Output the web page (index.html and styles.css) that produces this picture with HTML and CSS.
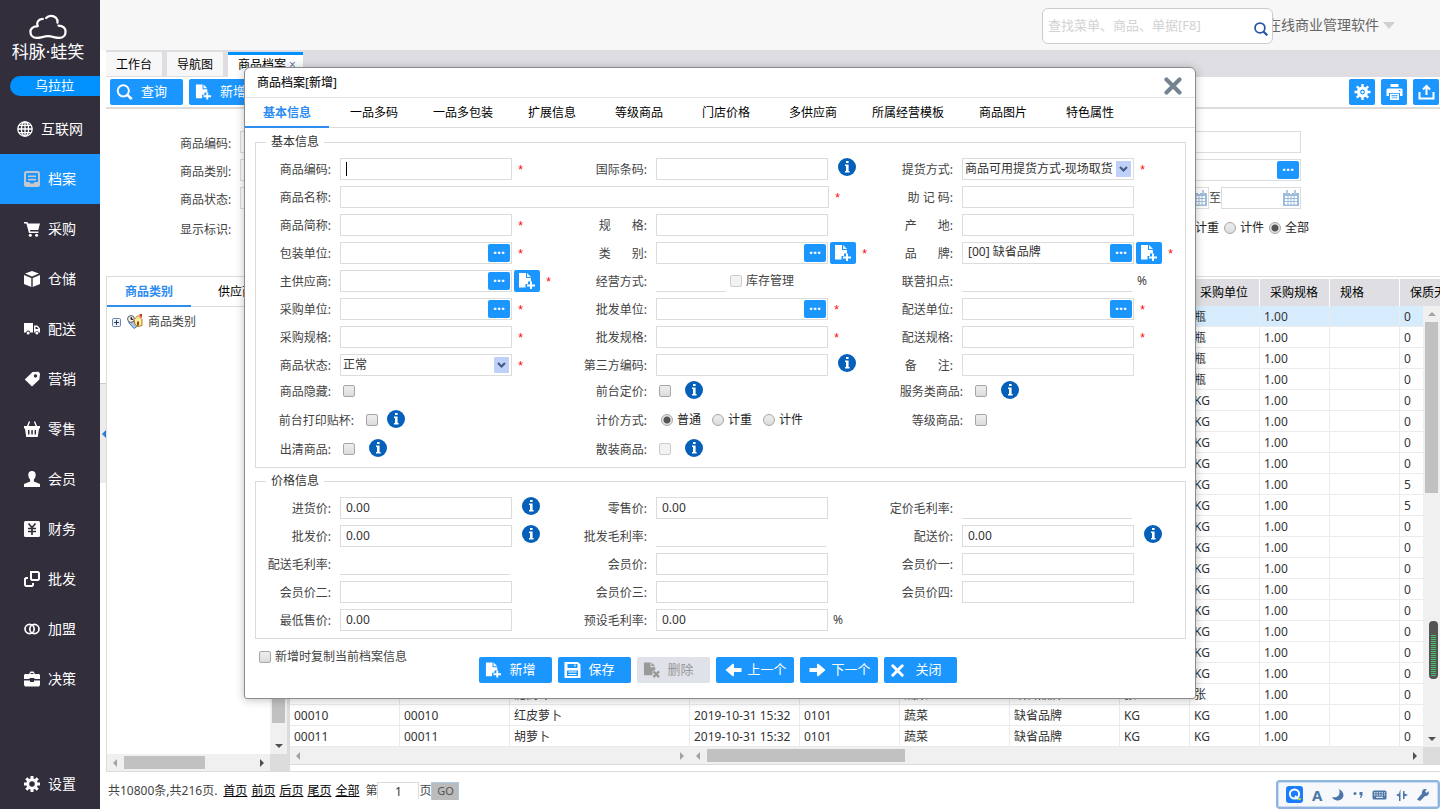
FILE: index.html
```
<!DOCTYPE html>
<html lang="zh-CN">
<head>
  <meta charset="UTF-8" />
  <meta name="viewport" content="width=device-width, initial-scale=1.0" />
  <title>商品档案</title>
  <link rel="stylesheet" href="styles.css">
</head>
<body>
  <svg class="defs" aria-hidden="true">
    <symbol id="i-globe" viewBox="0 0 16 16"><g fill="none" stroke="currentColor" stroke-width="1.3"><circle cx="8" cy="8" r="7.2"/><ellipse cx="8" cy="8" rx="3.6" ry="7.2"/><path d="M8 1v14M1 8h14M2 4.4h12M2 11.6h12"/></g></symbol>
    <symbol id="i-file" viewBox="0 0 16 16"><path fill="none" stroke="currentColor" stroke-width="2" d="M2.5 1h11A1.5 1.5 0 0 1 15 2.500v11a1.500 1.500 0 0 1-1.500 1.500h-11A1.500 1.500 0 0 1 1 13.500v-11A1.500 1.500 0 0 1 2.500 1z"/><path fill="currentColor" d="M4 4.500h8v1.600H4zM4 7.800h8v1.600H4zM1 11h4.500l1 1.500h3l1-1.500H15v4H1z"/></symbol>
    <symbol id="i-cart" viewBox="0 0 16 16"><path fill="currentColor" d="M0 1h3.400l.6 1.500h12L14.300 9H6l.4 1.400h8V12H5L2.400 2.600H0z"/><circle cx="6.300" cy="14.300" r="1.500" fill="currentColor"/><circle cx="12.600" cy="14.300" r="1.500" fill="currentColor"/></symbol>
    <symbol id="i-box" viewBox="0 0 16 16"><path fill="currentColor" d="M8 0l7 2.600L8 5.500 1 2.600zM0 4l7.300 3v9L0 13zM16 4L8.700 7v9l7.300-3z"/></symbol>
    <symbol id="i-truck" viewBox="0 0 16 16"><path fill="currentColor" fill-rule="evenodd" d="M0 2h9v9.500H6.200a2 2 0 0 0-4 0H0zM10 4.500h3.500L16 7.500v4h-1.200a2 2 0 0 0-3.800 0h-1zM11.500 6v2h3L13 6z"/><circle cx="4.200" cy="12" r="1.500" fill="currentColor"/><circle cx="12.900" cy="12" r="1.500" fill="currentColor"/></symbol>
    <symbol id="i-tag" viewBox="0 0 16 16"><path fill="currentColor" fill-rule="evenodd" d="M8.500 1l6-.2L16 2.500l-.6 6L8 15.500.8 8.500zM11.500 3.200a1.700 1.700 0 1 0 .01 0z"/></symbol>
    <symbol id="i-basket" viewBox="0 0 16 16"><path fill="none" stroke="currentColor" stroke-width="1.400" d="M3.500 5.500l2-5M12.500 5.500l-2-5"/><path fill="currentColor" fill-rule="evenodd" d="M0 5h16v2.400h-1L13.800 16H2.200L1 7.400H0zM4 9v4.500h1.500V9zM7.300 9v4.500h1.500V9zM10.600 9v4.500H12V9z"/></symbol>
    <symbol id="i-user" viewBox="0 0 16 16"><path fill="currentColor" d="M8 0c2.300 0 3.800 1.500 3.700 4-.1 2-.9 3.600-1.900 4.600v2L16 13v3H0v-3l6.200-2.400v-2C5.200 7.600 4.400 6 4.300 4 4.200 1.500 5.700 0 8 0z"/></symbol>
    <symbol id="i-yen" viewBox="0 0 16 16"><rect width="16" height="16" rx="1.500" fill="currentColor"/><path fill="none" stroke="#322e3c" stroke-width="1.700" d="M4.500 2.500L8 6.500l3.500-4M4 7.500h8M4 10.500h8M8 6.500V14"/></symbol>
    <symbol id="i-copy" viewBox="0 0 16 16"><path fill="none" stroke="currentColor" stroke-width="2" d="M7 1h7l1 1v6l-1 1H8L7 8zM4 7H2L1 8v6l1 1h6l1-1v-2"/></symbol>
    <symbol id="i-rings" viewBox="0 0 16 16"><g fill="none" stroke="currentColor" stroke-width="1.700"><circle cx="5.600" cy="8" r="4.600"/><circle cx="10.400" cy="8" r="4.600"/></g></symbol>
    <symbol id="i-case" viewBox="0 0 16 16"><path fill="currentColor" fill-rule="evenodd" d="M5 3l1.500-2.500h3L11 3h4l1 1v4h-5.500V7h-5v1H0V4l1-1zM6.500 3h3V2h-3zM0 9.500h6V11h4V9.500h6V14l-1 1.500H1L0 14z"/></symbol>
    <symbol id="i-gear" viewBox="0 0 16 16"><circle cx="8" cy="8" r="4.300" fill="none" stroke="currentColor" stroke-width="3"/><path stroke="currentColor" stroke-width="3" d="M8 0v3M8 13v3M0 8h3M13 8h3M2.300 2.300l2.200 2.200M11.500 11.500l2.200 2.200M2.300 13.700l2.200-2.200M11.500 4.500l2.200-2.200"/></symbol>
    <symbol id="i-cog" viewBox="0 0 16 16"><circle cx="8" cy="8" r="4" fill="none" stroke="currentColor" stroke-width="3.200"/><circle cx="8" cy="8" r="1.200" fill="currentColor"/><path stroke="currentColor" stroke-width="2.400" d="M8 0v3M8 13v3M0 8h3M13 8h3M2.300 2.300l2.200 2.200M11.500 11.500l2.200 2.200M2.300 13.700l2.200-2.200M11.500 4.500l2.200-2.200"/></symbol>
    <symbol id="i-search" viewBox="0 0 16 16"><circle cx="6.800" cy="6.800" r="5.600" fill="none" stroke="currentColor" stroke-width="2"/><path stroke="currentColor" stroke-width="2.600" d="M10.800 10.800l4.400 4.400"/></symbol>
    <symbol id="i-add" viewBox="0 0 18 16"><path fill="currentColor" d="M1 0h7v5h5v3.500h-3V11H7.500v3.500H1zM9 0l4 4H9z"/><path stroke="currentColor" stroke-width="2" d="M9 12.500h8M13 8.500v7.500"/></symbol>
    <symbol id="i-del" viewBox="0 0 18 16"><path fill="currentColor" d="M1 0h7v5h5v3l-3 1v4.500H1zM9 0l4 4H9z"/><path stroke="currentColor" stroke-width="2.400" d="M11 9.500l6 6M17 9.500l-6 6"/></symbol>
    <symbol id="i-save" viewBox="0 0 16 16"><path fill="currentColor" fill-rule="evenodd" d="M0 0h13.500L16 2.500V16H0zM3 2v4h10V2zM2.500 8.500V14h11V8.500z"/><path stroke="currentColor" stroke-width="1.200" d="M4 10h8M4 12.500h8M10.500 2.500v2"/></symbol>
    <symbol id="i-left" viewBox="0 0 16 14"><path fill="currentColor" d="M0 7l7.500-6.500 1 1V5H16v4H8.500v3.500l-1 1z"/></symbol>
    <symbol id="i-right" viewBox="0 0 16 14"><path fill="currentColor" d="M16 7L8.500.5l-1 1V5H0v4h7.500v3.500l1 1z"/></symbol>
    <symbol id="i-x" viewBox="0 0 16 16"><path stroke="currentColor" stroke-width="3.600" stroke-linecap="round" d="M2.200 2.200l11.600 11.600M13.800 2.200L2.200 13.800"/></symbol>
    <symbol id="i-print" viewBox="0 0 16 16"><path fill="currentColor" fill-rule="evenodd" d="M4 0h8v3H4zM1 4.500h14l1 1V12h-2.500V9h-11v3H0V5.500zM12.500 6v1.300H14V6z"/><path fill="currentColor" fill-rule="evenodd" d="M3.500 9.800h9V16h-9zM5 11.300v.9h6v-.9zM5 13.400v.9h6v-.9z"/></symbol>
    <symbol id="i-export" viewBox="0 0 16 16"><path fill="none" stroke="currentColor" stroke-width="2" d="M1 8v6.500h14V8M8 11V2M4.500 5.500L8 2l3.500 3.500"/></symbol>
    <symbol id="i-info" viewBox="0 0 18 18"><circle cx="9" cy="9" r="9" fill="#0460b9"/><path fill="#fff" d="M8 3h2.600v2H8zM7 6.500h3.600V13h1v1.500H7V13h1V8H7z"/></symbol>
    <symbol id="i-cal" viewBox="0 0 16 16"><path fill="#9dbcdb" d="M0 3h16v13H0z"/><path fill="#fff" d="M2 6h12v8.500H2z"/><path stroke="#9dbcdb" d="M5 6v9M8 6v9M11 6v9M2 8.500h12M2 11.500h12"/><path stroke="#fff" stroke-width="2" d="M4 0v4M8 0v4M12 0v4"/><path stroke="#8fb2d4" stroke-width="1.400" d="M4 0v4M12 0v4"/></symbol>
  </svg>

  <aside class="sidebar">
    <div class="logo">
      <svg width="38" height="26" viewBox="0 0 40 26" fill="none" stroke="#fff" stroke-width="2.400" stroke-linecap="round"><path d="M9 12C3 12 1.500 16 1.500 18c0 4 3 6.500 6.500 6.500 5 0 7-1.800 12-1.800s7 1.800 12 1.800c3.500 0 6.500-2.500 6.500-6.500 0-3.500-2.500-6.500-7.500-6.500"/><path d="M9 12C7.500 8 10 4.500 14.500 4.500M18 3.500C19.500 1.800 21.500 1.200 23 1.200c4.500 0 7.500 3.300 7 7.300"/></svg>
      <strong>科脉·蛙笑</strong>
    </div>
    <div class="shop">乌拉拉</div>
    <nav class="menu">
      <a href="#"><svg><use href="#i-globe"/></svg>互联网</a>
      <a href="#" class="active"><svg><use href="#i-file"/></svg>档案</a>
      <a href="#"><svg><use href="#i-cart"/></svg>采购</a>
      <a href="#"><svg><use href="#i-box"/></svg>仓储</a>
      <a href="#"><svg><use href="#i-truck"/></svg>配送</a>
      <a href="#"><svg><use href="#i-tag"/></svg>营销</a>
      <a href="#"><svg><use href="#i-basket"/></svg>零售</a>
      <a href="#"><svg><use href="#i-user"/></svg>会员</a>
      <a href="#"><svg><use href="#i-yen"/></svg>财务</a>
      <a href="#"><svg><use href="#i-copy"/></svg>批发</a>
      <a href="#"><svg><use href="#i-rings"/></svg>加盟</a>
      <a href="#"><svg><use href="#i-case"/></svg>决策</a>
      <a href="#" class="last"><svg><use href="#i-gear"/></svg>设置</a>
    </nav>
  </aside>

  <div class="page">
    <header class="topbar">
      <div class="search">
        <input type="text" aria-label="查找" placeholder="查找菜单、商品、单据[F8]" />
        <svg width="14" height="14"><use href="#i-search"/></svg>
      </div>
      <span class="company">在线商业管理软件</span>
      <i class="caret"></i>
    </header>

    <main class="content">
      <nav class="tabs">
        <a href="#">工作台</a>
        <a href="#">导航图</a>
        <a href="#" class="active">商品档案<span>×</span></a>
      </nav>

      <div class="toolbar">
        <button class="btn"><svg><use href="#i-search"/></svg>查询</button>
        <button class="btn"><svg><use href="#i-add"/></svg>新增</button>
        <div class="tools">
          <button class="btn icon" aria-label="设置"><svg><use href="#i-cog"/></svg></button>
          <button class="btn icon" aria-label="打印"><svg><use href="#i-print"/></svg></button>
          <button class="btn icon" aria-label="导出"><svg><use href="#i-export"/></svg></button>
        </div>
      </div>

      <div class="filters">
        <div class="filter-row"><label for="q1">商品编码:</label><input id="q1" class="box" type="text" /><input class="box push" type="text" aria-label="条码" /></div>
        <div class="filter-row"><label for="q2">商品类别:</label><input id="q2" class="box" type="text" /><div class="picker push"><input type="text" aria-label="供应商" /><button aria-label="选择">···</button></div></div>
        <div class="filter-row"><label for="q3">商品状态:</label><input id="q3" class="box" type="text" value="正常" />
          <div class="dates push">
            <div class="picker date"><input type="text" aria-label="开始日期" /><svg width="16" height="16"><use href="#i-cal"/></svg></div>至
            <div class="picker date"><input type="text" aria-label="结束日期" /><svg width="16" height="16"><use href="#i-cal"/></svg></div>
          </div>
        </div>
        <div class="filter-row radios"><span class="lbl">显示标识:</span>
          <div class="radio-set push">
            <label><input type="radio" name="kind" />计重</label>
            <label><input type="radio" name="kind" />计件</label>
            <label><input type="radio" name="kind" checked />全部</label>
          </div>
        </div>
      </div>

      <div class="panels">
        <section class="tree">
          <nav class="tree-tabs"><a href="#" class="active">商品类别</a><a href="#">供应商</a></nav>
          <div class="tree-body">
            <div class="tree-view">
              <div class="node">
                <svg width="9" height="9" viewBox="0 0 9 9"><rect x=".5" y=".5" width="8" height="8" rx="1" fill="#eef2f8" stroke="#6f86a8"/><path stroke="#223a66" d="M2 4.500h5M4.500 2v5"/></svg>
                <svg width="16" height="16" viewBox="0 0 16 16"><path fill="#a9c4ea" stroke="#5674a8" d="M2 9l5 5.500 5-3.500V7H2z"/><circle cx="4" cy="5" r="3.400" fill="#f4f4f4" stroke="#555"/><path stroke="#333" d="M4 3v2.500h2"/><path fill="#ffe9a8" stroke="#b57a10" d="M7 5.500l4-4 4 4v6l-4 1-3-2z"/><path fill="#d23c1e" d="M12.500 0H15v4l-2.500-2z"/><path fill="#8a4b10" d="M10 7.500h2v4h-2z"/></svg>
                商品类别
              </div>
            </div>
            <div class="vbar"><i class="up"></i><b class="tree-thumb"></b><i class="down dark"></i></div>
          </div>
          <div class="tree-foot">
            <div class="hbar"><i class="left"></i><b class="thumb-81"></b><i class="right dark"></i></div>
            <div class="corner"></div>
          </div>
        </section>

        <section class="grid">
          <div class="grid-head">
            <table>
              <colgroup class="cols"></colgroup>
              <thead><tr><th>商品编码</th><th>自编码</th><th>商品名称</th><th>建档时间</th><th>类别编码</th><th>类别</th><th>品牌</th><th>单位</th><th>采购单位</th><th>采购规格</th><th>规格</th><th>保质天数</th></tr></thead>
            </table>
          </div>
          <div class="grid-body">
            <div class="grid-view">
              <table>
                <colgroup class="cols"></colgroup>
                <tbody id="rows"></tbody>
              </table>
            </div>
            <div class="vbar"><i class="up"></i><b class="grid-thumb"></b><i class="down dark"></i></div>
          </div>
          <div class="grid-foot">
            <div class="hbar frozen"><i class="left"></i><i class="right"></i></div>
            <div class="hbar"><i class="left"></i><b class="thumb-198"></b><i class="right dark"></i></div>
            <div class="corner"></div>
          </div>
        </section>
      </div>

      <footer class="pager">
        <span>共10800条,共216页.</span>
        <a href="#">首页</a><a href="#">前页</a><a href="#">后页</a><a href="#">尾页</a><a href="#">全部</a>
        <label for="pageNo">第</label><input id="pageNo" type="text" value="1" />页<button>GO</button>
      </footer>
    </main>
  </div>

  <button class="collapse" aria-label="收起"><i></i></button>

  <div class="dialog" role="dialog" aria-labelledby="dlgTitle">
    <div class="dialog-head">
      <h2 id="dlgTitle">商品档案[新增]</h2>
      <button class="close" aria-label="关闭"><svg width="18" height="18"><use href="#i-x"/></svg></button>
    </div>
    <nav class="dialog-tabs">
      <a href="#" class="active">基本信息</a>
      <a href="#">一品多码</a>
      <a href="#">一品多包装</a>
      <a href="#">扩展信息</a>
      <a href="#">等级商品</a>
      <a href="#">门店价格</a>
      <a href="#">多供应商</a>
      <a href="#">所属经营模板</a>
      <a href="#">商品图片</a>
      <a href="#">特色属性</a>
    </nav>

    <form class="dialog-body">
      <fieldset>
        <legend>基本信息</legend>
        <div class="form">
          <div class="field"><label for="f1">商品编码:</label><input id="f1" class="box focused" type="text" /><em>*</em></div>
          <div class="field"><label for="f2">国际条码:</label><input id="f2" class="box" type="text" /><svg class="info"><use href="#i-info"/></svg></div>
          <div class="field"><label for="f3">提货方式:</label><select id="f3" class="box"><option>商品可用提货方式-现场取货</option></select><em>*</em></div>

          <div class="field span2"><label for="f4">商品名称:</label><input id="f4" class="box long" type="text" /><em>*</em></div>
          <div class="field"><label for="f5">助 记 码:</label><input id="f5" class="box" type="text" /></div>

          <div class="field"><label for="f6">商品简称:</label><input id="f6" class="box" type="text" /><em>*</em></div>
          <div class="field"><label for="f7">规&emsp;&ensp;&nbsp;格:</label><input id="f7" class="box" type="text" /></div>
          <div class="field"><label for="f8">产&emsp;&ensp;&nbsp;地:</label><input id="f8" class="box" type="text" /></div>

          <div class="field"><label for="f9">包装单位:</label><div class="picker"><input id="f9" type="text" /><button type="button" aria-label="选择">···</button></div><em>*</em></div>
          <div class="field"><label for="f10">类&emsp;&ensp;&nbsp;别:</label><div class="picker"><input id="f10" type="text" /><button type="button" aria-label="选择">···</button></div><button type="button" class="add" aria-label="新增"><svg><use href="#i-add"/></svg></button><em>*</em></div>
          <div class="field"><label for="f11">品&emsp;&ensp;&nbsp;牌:</label><div class="picker"><input id="f11" type="text" value="[00] 缺省品牌" /><button type="button" aria-label="选择">···</button></div><button type="button" class="add" aria-label="新增"><svg><use href="#i-add"/></svg></button><em>*</em></div>

          <div class="field"><label for="f12">主供应商:</label><div class="picker"><input id="f12" type="text" /><button type="button" aria-label="选择">···</button></div><button type="button" class="add" aria-label="新增"><svg><use href="#i-add"/></svg></button><em>*</em></div>
          <div class="field"><label for="f13">经营方式:</label><input id="f13" class="line short" type="text" readonly /><label class="check"><input type="checkbox" disabled />库存管理</label></div>
          <div class="field"><label for="f14">联营扣点:</label><input id="f14" class="line" type="text" readonly /><span class="unit">%</span></div>

          <div class="field"><label for="f15">采购单位:</label><div class="picker"><input id="f15" type="text" /><button type="button" aria-label="选择">···</button></div><em>*</em></div>
          <div class="field"><label for="f16">批发单位:</label><div class="picker"><input id="f16" type="text" /><button type="button" aria-label="选择">···</button></div><em>*</em></div>
          <div class="field"><label for="f17">配送单位:</label><div class="picker"><input id="f17" type="text" /><button type="button" aria-label="选择">···</button></div><em>*</em></div>

          <div class="field"><label for="f18">采购规格:</label><input id="f18" class="box" type="text" /><em>*</em></div>
          <div class="field"><label for="f19">批发规格:</label><input id="f19" class="box" type="text" /><em>*</em></div>
          <div class="field"><label for="f20">配送规格:</label><input id="f20" class="box" type="text" /><em>*</em></div>

          <div class="field"><label for="f21">商品状态:</label><select id="f21" class="box"><option>正常</option></select><em>*</em></div>
          <div class="field"><label for="f22">第三方编码:</label><input id="f22" class="box" type="text" /><svg class="info"><use href="#i-info"/></svg></div>
          <div class="field"><label for="f23">备&emsp;&ensp;&nbsp;注:</label><input id="f23" class="box" type="text" /></div>
        </div>
        <div class="form checks">
          <div class="field"><label for="c1">商品隐藏:</label><input id="c1" type="checkbox" /></div>
          <div class="field"><label for="c2">前台定价:</label><input id="c2" type="checkbox" /><svg class="info"><use href="#i-info"/></svg></div>
          <div class="field mid"><label for="c3">服务类商品:</label><input id="c3" type="checkbox" /><svg class="info"><use href="#i-info"/></svg></div>

          <div class="field wide"><label for="c4">前台打印贴杯:</label><input id="c4" type="checkbox" /><svg class="info near"><use href="#i-info"/></svg></div>
          <div class="field"><span class="lbl">计价方式:</span>
            <div class="radio-set">
              <label><input type="radio" name="price" checked />普通</label>
              <label><input type="radio" name="price" />计重</label>
              <label><input type="radio" name="price" />计件</label>
            </div>
          </div>
          <div class="field mid"><label for="c5">等级商品:</label><input id="c5" type="checkbox" /></div>

          <div class="field"><label for="c6">出清商品:</label><input id="c6" type="checkbox" /><svg class="info"><use href="#i-info"/></svg></div>
          <div class="field"><label for="c7">散装商品:</label><input id="c7" type="checkbox" disabled /><svg class="info"><use href="#i-info"/></svg></div>
        </div>
      </fieldset>

      <fieldset>
        <legend>价格信息</legend>
        <div class="form">
          <div class="field"><label for="p1">进货价:</label><input id="p1" class="box" type="text" value="0.00" /><svg class="info"><use href="#i-info"/></svg></div>
          <div class="field"><label for="p2">零售价:</label><input id="p2" class="box" type="text" value="0.00" /></div>
          <div class="field"><label for="p3">定价毛利率:</label><input id="p3" class="line" type="text" readonly /></div>

          <div class="field"><label for="p4">批发价:</label><input id="p4" class="box" type="text" value="0.00" /><svg class="info"><use href="#i-info"/></svg></div>
          <div class="field"><label for="p5">批发毛利率:</label><input id="p5" class="line" type="text" readonly /></div>
          <div class="field"><label for="p6">配送价:</label><input id="p6" class="box" type="text" value="0.00" /><svg class="info"><use href="#i-info"/></svg></div>

          <div class="field"><label for="p7">配送毛利率:</label><input id="p7" class="line" type="text" readonly /></div>
          <div class="field"><label for="p8">会员价:</label><input id="p8" class="box" type="text" /></div>
          <div class="field"><label for="p9">会员价一:</label><input id="p9" class="box" type="text" /></div>

          <div class="field"><label for="p10">会员价二:</label><input id="p10" class="box" type="text" /></div>
          <div class="field"><label for="p11">会员价三:</label><input id="p11" class="box" type="text" /></div>
          <div class="field"><label for="p12">会员价四:</label><input id="p12" class="box" type="text" /></div>

          <div class="field"><label for="p13">最低售价:</label><input id="p13" class="box" type="text" value="0.00" /></div>
          <div class="field"><label for="p14">预设毛利率:</label><input id="p14" class="box" type="text" value="0.00" /><span class="unit">%</span></div>
        </div>
      </fieldset>

      <div class="dialog-foot">
        <label class="check"><input type="checkbox" />新增时复制当前档案信息</label>
        <div class="actions">
          <button type="button" class="btn"><svg><use href="#i-add"/></svg>新增</button>
          <button type="button" class="btn"><svg><use href="#i-save"/></svg>保存</button>
          <button type="button" class="btn" disabled><svg><use href="#i-del"/></svg>删除</button>
          <button type="button" class="btn move"><svg><use href="#i-left"/></svg>上一个</button>
          <button type="button" class="btn move"><svg><use href="#i-right"/></svg>下一个</button>
          <button type="button" class="btn"><svg class="small"><use href="#i-x"/></svg>关闭</button>
        </div>
        <span></span>
      </div>
    </form>
  </div>

  <div class="meter"></div>

  <div class="ime">
    <svg width="17" height="17" viewBox="0 0 17 17"><rect width="17" height="17" rx="3" fill="#1a7cff"/><circle cx="8.500" cy="8" r="4.600" fill="none" stroke="#fff" stroke-width="2"/><path stroke="#fff" stroke-width="2" d="M9 10l3 3"/><circle cx="13.500" cy="13" r="1.300" fill="#c8f000"/></svg>
    <b>A</b>
    <svg width="13" height="13" viewBox="0 0 13 13"><path fill="#4a77a8" d="M8 1c5 2.500 6 8 2 10.500-3.500 2-7.500.5-9-2.500 5 1.500 9-2 7-8z"/></svg>
    <svg width="10" height="10" viewBox="0 0 10 10"><circle cx="2" cy="3.500" r="1.500" fill="#4a77a8"/><path fill="#4a77a8" d="M6.500 2h3v3L8 8H7l.8-3H6.500z"/></svg>
    <svg width="15" height="10" viewBox="0 0 15 10"><rect x=".5" y=".5" width="14" height="9" rx="1.500" fill="#4a77a8"/><path stroke="#fff" stroke-dasharray="1.500 1" d="M2 2.800h11M2 5h11"/><path stroke="#fff" d="M4 7.300h7"/></svg>
    <svg width="12" height="12" viewBox="0 0 12 12"><path fill="#4a77a8" d="M4.500 0v12H3V7.500L0 6l3-1.500zM7 2h1.500v2.500L12 6 8.500 7.500V10H7z"/></svg>
    <svg width="12" height="12" viewBox="0 0 12 12"><path fill="#4a77a8" d="M8 0l2 .5L8 2.500l1.500 1.500 2-2C12.500 5 11 7.500 8 7l-5 5-3-1.500 5-6C4.500 2 6 0 8 0z"/></svg>
  </div>

  <script>
    const widths = [110, 110, 180, 110, 100, 110, 110, 70, 70, 70, 70, 70];
    document.querySelectorAll(".cols").forEach(group => {
      widths.forEach(w => {
        const col = document.createElement("col");
        col.style.width = w + "px";
        group.appendChild(col);
      });
    });

    const units = ["瓶", "瓶", "瓶", "瓶"].concat(Array(14).fill("KG"), ["张", "KG", "KG"]);
    const names = { 18: "泥蒿叶", 19: "红皮萝卜", 20: "胡萝卜" };
    const codes = { 19: "00010", 20: "00011" };

    document.getElementById("rows").innerHTML = units.map((unit, i) => {
      const code = codes[i] || "";
      const days = i === 8 || i === 9 ? 5 : 0;
      const cells = [code, code, names[i] || "", "2019-10-31 15:32", "0101", "蔬菜", "缺省品牌", unit, unit, "1.00", "", days];
      return `<tr class="${i === 0 ? "selected" : ""}">${cells.map(c => `<td>${c}</td>`).join("")}</tr>`;
    }).join("");
  </script>
</body>
</html>
```
FILE: styles.css
```
:root {
  --blue: #1c96ff;
  --line: #dcdcdc;
  --dark: #322e3c;
  --text: #444;
}

* {
  box-sizing: border-box;
}

html, body {
  margin: 0;
  height: 100%;
  overflow: hidden;
}

body {
  display: flex;
  background: #fff;
  color: var(--text);
  font: 12px/16px "Noto Sans", "Noto Sans CJK SC", sans-serif;
}

a {
  color: inherit;
  text-decoration: none;
}

input, select, button {
  margin: 0;
  padding: 0;
  border: 0;
  border-radius: 0;
  background: none;
  color: #333;
  font: inherit;
  outline: 0;
}

button {
  cursor: pointer;
}

svg {
  flex: none;
}

.defs {
  position: absolute;
  width: 0;
  height: 0;
}

/* sidebar */
.sidebar {
  flex: none;
  display: flex;
  flex-direction: column;
  width: 100px;
  background: var(--dark);
  color: #fff;
}

.logo {
  display: flex;
  flex-direction: column;
  align-items: center;
  padding: 14px 4px 0 0;
}

.logo strong {
  font-size: 17px;
  font-weight: 400;
  line-height: 24px;
}

.shop {
  margin: 12px 0 8px 10px;
  padding: 0 1px 2px 0;
  border-radius: 10px 0 0 10px;
  background: #0091ff;
  font-size: 13px;
  line-height: 18px;
  text-align: center;
}

.menu {
  flex: 1;
  display: flex;
  flex-direction: column;
}

.menu a {
  display: flex;
  align-items: center;
  justify-content: center;
  gap: 8px;
  height: 50px;
  font-size: 14px;
}

.menu svg {
  width: 16px;
  height: 16px;
}

.menu .active {
  background: var(--blue);
}

.menu .active svg {
  color: #c4c8cc;
}

.menu .last {
  margin-top: auto;
}

/* top */
.page {
  flex: 1;
  min-width: 0;
  display: flex;
  flex-direction: column;
}

.topbar {
  display: flex;
  align-items: center;
  justify-content: flex-end;
  height: 50px;
  padding-right: 45px;
  background: #f7f7f7;
}

.search {
  z-index: 1;
  display: flex;
  align-items: center;
  width: 231px;
  height: 36px;
  margin: 2px -6px 0 0;
  padding: 0 4px 0 5px;
  border: 1px solid #ccc;
  border-radius: 6px;
  background: #fff;
  color: #2a56a0;
}

.search input {
  flex: 1;
  min-width: 0;
  padding-bottom: 2px;
  font-size: 13px;
}

.search svg {
  margin-top: 6px;
}

.search input::placeholder {
  color: #d2d2d2;
}

.company {
  color: #666;
  font-size: 14px;
}

.caret {
  margin-left: 4px;
  border: 6px solid transparent;
  border-top: 7px solid #d0d0d0;
  border-bottom: 0;
}

.content {
  flex: 1;
  min-height: 0;
  display: flex;
  flex-direction: column;
  margin-left: 6px;
}

.tabs {
  display: flex;
  gap: 5px;
  height: 27px;
  padding: 2px 0 0;
  background: #dddde2;
}

.tabs a {
  height: 24px;
  padding: 0 10px;
  background: #f7f7f7;
  color: #000;
  line-height: 25px;
}

.tabs .active {
  height: 25px;
  padding-right: 7px;
  border-top: 3px solid #0091ff;
  background: #fff;
  line-height: 19px;
}

.tabs span {
  margin-left: 3px;
  color: #5b7db1;
}

.toolbar {
  display: flex;
  align-items: flex-start;
  gap: 6px;
  height: 32px;
  padding: 2px 1px 0 4px;
  border-bottom: 2px solid var(--line);
}

.tools {
  display: flex;
  gap: 6px;
  margin-left: auto;
}

.btn {
  display: flex;
  align-items: center;
  gap: 8px;
  width: 73px;
  height: 26px;
  padding: 0 0 2px 6px;
  border-radius: 2px;
  background: var(--blue);
  color: #fff;
  font-size: 13px;
}

.btn svg {
  width: 17px;
  height: 16px;
  margin-top: 2px;
}

.btn .small {
  width: 13px;
  height: 13px;
  margin: 2px 4px 0 1px;
}

.btn.icon {
  width: 26px;
  padding-left: 5px;
}

.btn.move {
  width: 78px;
  gap: 6px;
  padding-left: 9px;
}

.btn.move svg {
  height: 14px;
}

.btn:disabled {
  background: #dfe2e8;
  color: #999;
}

/* filters */
.filters {
  display: flex;
  flex-direction: column;
  gap: 6px;
  height: 167px;
  padding: 22px 139px 0 74px;
}

.filter-row {
  display: flex;
  align-items: center;
  gap: 7px;
  height: 22px;
}

.filter-row > label, .filter-row > .lbl {
  width: 53px;
  padding-top: 3px;
}

.filter-row.radios {
  height: 26px;
  margin-right: -8px;
}

.push {
  margin-left: auto;
}

.dates {
  display: flex;
  align-items: center;
}

.picker.date {
  width: 80px;
}

.box, .picker {
  width: 172px;
  height: 22px;
  border: 1px solid var(--line);
  background: #fff;
}

.box, .picker input {
  padding: 0 5px 2px;
}

.box.long {
  width: 489px;
}

.box.focused {
  background: linear-gradient(#000, #000) 5px 3px / 1px 14px no-repeat #fff;
}

.picker {
  display: flex;
  align-items: center;
  padding-right: 1px;
}

.picker input {
  flex: 1;
  min-width: 0;
}

.picker button {
  width: 22px;
  height: 18px;
  border-radius: 2px;
  background: var(--blue);
  color: #fff;
  font-size: 14px;
  font-weight: bold;
  line-height: 16px;
}

.line {
  width: 170px;
  height: 22px;
  border-bottom: 1px solid var(--line);
}

.line.short {
  width: 70px;
}

select.box {
  padding: 0 20px 0 2px;
  appearance: none;
  background: url("data:image/svg+xml,%3Csvg xmlns='http://www.w3.org/2000/svg' width='15' height='16'%3E%3Crect width='15' height='16' rx='1' fill='%23bfd1f9'/%3E%3Cpath d='M4 6l3.500 3.500L11 6' fill='none' stroke='%23435b85' stroke-width='2.200'/%3E%3C/svg%3E") right 2px center no-repeat #fff;
}

input[type="checkbox"], input[type="radio"] {
  flex: none;
  appearance: none;
  width: 12px;
  height: 12px;
  border: 1px solid #a6a6a6;
  border-radius: 2px;
  background: linear-gradient(#eee, #dcdcdc);
}

input[type="checkbox"]:disabled {
  border-color: #ccc;
  background: #f2f2f2;
}

input[type="radio"] {
  border-radius: 50%;
}

input[type="radio"]:checked {
  background: radial-gradient(#555 0 3px, #e6e6e6 4px);
}

.radio-set {
  display: flex;
  gap: 5px;
}

.radio-set label, .check {
  display: flex;
  align-items: center;
  gap: 4px;
}

.radio-set label {
  color: #222;
}

/* tree */
.panels {
  flex: 1;
  min-height: 0;
  display: flex;
  border: solid var(--line);
  border-width: 1px 0 1px 1px;
}

.tree {
  display: flex;
  flex-direction: column;
  width: 183px;
  border-right: 3px solid var(--line);
  overflow: hidden;
}

.tree-tabs {
  display: flex;
  gap: 3px;
  height: 30px;
  border-bottom: 1px solid var(--line);
  line-height: 30px;
}

.tree-tabs a {
  flex: none;
  min-width: 84px;
  height: 30px;
  padding-left: 24px;
  color: #000;
}

.tree-tabs .active {
  padding-left: 18px;
  border-bottom: 2px solid #2d8cf0;
  color: #2d8cf0;
  font-weight: bold;
}

.tree-body, .grid-body {
  flex: 1;
  min-height: 0;
  display: flex;
}

.tree-view, .grid-view {
  flex: 1;
  min-width: 0;
  overflow: hidden;
}

.node {
  display: flex;
  align-items: center;
  gap: 6px;
  padding: 7px 5px;
}

.node svg + svg {
  margin-right: -1px;
}

.vbar {
  display: flex;
  flex-direction: column;
  align-items: center;
  width: 17px;
  padding: 6px 0;
  background: #f0f0f0;
}

.vbar b {
  width: 13px;
  background: #c1c1c1;
}

.vbar i, .hbar i {
  border: 4px solid transparent;
}

.vbar .up {
  margin-bottom: 6px;
  border-top: 0;
  border-bottom-color: #a3a3a3;
}

.vbar .down {
  margin-top: auto;
  border-bottom: 0;
  border-top-color: #505050;
}

.tree-thumb {
  height: 400px;
}

.grid-thumb {
  height: 171px;
}

.tree-foot, .grid-foot {
  display: flex;
  height: 17px;
}

.hbar {
  flex: 1;
  display: flex;
  align-items: center;
  padding: 0 6px;
  background: #f0f0f0;
}

.hbar b {
  height: 13px;
  margin-left: 7px;
  background: #c1c1c1;
}

.hbar .left {
  border-left: 0;
  border-right-color: #a3a3a3;
}

.hbar .right {
  margin-left: auto;
  border-right: 0;
  border-left-color: #a3a3a3;
}

.hbar .right.dark {
  border-left-color: #505050;
}

.thumb-81 {
  width: 81px;
}

.thumb-198 {
  width: 198px;
}

.corner {
  width: 17px;
  background: #dcdcdc;
}

/* grid */
.grid {
  flex: 1;
  min-width: 0;
  display: flex;
  flex-direction: column;
  margin-bottom: 6px;
  padding-top: 2px;
  border-bottom: 1px solid var(--line);
}

.grid-head {
  height: 27px;
  overflow: hidden;
  background: #dfdfe3;
}

table {
  width: 1180px;
  table-layout: fixed;
  border-collapse: separate;
  border-spacing: 0;
}

th {
  height: 27px;
  padding: 1px 0 0 10px;
  border-right: 1px solid #fff;
  color: #000;
  font-weight: normal;
  text-align: left;
  white-space: nowrap;
}

td {
  height: 21px;
  padding: 2px 4px 0;
  border: solid #ebebeb;
  border-width: 0 1px 1px 0;
  color: #333;
  line-height: 18px;
  white-space: nowrap;
}

.selected td {
  background: #d6ecfd;
}

.hbar.frozen {
  flex: none;
  width: 400px;
}

/* pager */
.pager {
  display: flex;
  align-items: center;
  height: 37px;
  padding-left: 2px;
}

.pager span {
  margin-right: 6px;
}

.pager a {
  margin-right: 4px;
  color: #000;
  text-decoration: underline;
}

.pager label {
  margin-left: 2px;
}

.pager input {
  width: 42px;
  height: 17px;
  border: 1px solid var(--line);
  border-bottom: 0;
  text-align: center;
}

.pager button {
  width: 28px;
  height: 18px;
  border: 1px solid #a9cbe4;
  border-bottom: 0;
  background: #bbb;
  color: #555;
  font-size: 11px;
}

.collapse {
  position: absolute;
  left: 100px;
  top: 383px;
  display: flex;
  align-items: center;
  width: 6px;
  height: 100px;
  border-top: 1px solid #ccc;
  background: #ececec;
}

.collapse i {
  margin-left: 2px;
  border: 4px solid transparent;
  border-left: 0;
  border-right-color: #2a7bd0;
}

/* dialog */
.dialog {
  position: absolute;
  left: 244px;
  right: 244px;
  top: 67px;
  z-index: 2;
  border: 1px solid #8c8c8c;
  border-radius: 6px 6px 3px 3px;
  background: #fff;
  box-shadow: 0 1px 10px rgba(0, 0, 0, 0.25);
}

.dialog-head {
  display: flex;
  align-items: center;
  justify-content: space-between;
  height: 30px;
  padding: 0 13px 0 12px;
  border-bottom: 1px solid #e2e2e2;
}

.dialog-head h2 {
  margin: 0;
  color: #222;
  font-size: 12px;
  font-weight: 500;
}

.close {
  height: 18px;
  margin-top: 6px;
  color: #748292;
}

.dialog-tabs {
  display: flex;
  gap: 3px;
  height: 30px;
  border-bottom: 1px solid var(--line);
  line-height: 29px;
}

.dialog-tabs a {
  min-width: 84px;
  height: 30px;
  padding: 0 14px;
  color: #000;
  text-align: center;
}

.dialog-tabs .active {
  border-bottom: 2px solid #2d8cf0;
  color: #2d8cf0;
  font-weight: bold;
}

.dialog-body {
  padding: 6px 9px 15px 10px;
}

fieldset {
  min-width: 0;
  margin: 0 0 5px;
  padding: 5px 0 4px;
  border: 1px solid var(--line);
}

legend {
  margin-left: 10px;
  padding: 0 5px;
  color: #333;
}

.form {
  display: grid;
  grid-template-columns: 316fr 306fr 307fr;
  grid-auto-rows: 28px;
}

.form.checks {
  grid-auto-rows: 29px;
  margin-top: -3px;
}

.field {
  display: flex;
  align-items: center;
}

.field > label:first-child, .field > .lbl {
  flex: none;
  width: 75px;
  margin-right: 9px;
  padding-top: 2px;
  text-align: right;
  white-space: pre;
}

.field.mid > label:first-child {
  width: 85px;
}

.field.wide > label:first-child {
  width: 98px;
}

.span2 {
  grid-column: span 2;
}

.field em {
  margin-left: 5px;
  padding-top: 4px;
  color: #f00;
  font-family: "Liberation Mono", monospace;
  font-style: normal;
}

.info {
  width: 18px;
  height: 18px;
  margin: 0 0 4px 10px;
}

.checks .info {
  margin: 0 0 2px 14px;
}

.checks .info.near {
  margin-left: 9px;
}

.checks input[type="checkbox"] {
  margin-left: 3px;
}

.field .radio-set {
  gap: 11px;
  margin-left: 5px;
}

.field .check {
  margin-left: 4px;
}

.add {
  display: flex;
  align-items: center;
  justify-content: center;
  width: 26px;
  height: 22px;
  margin-left: 2px;
  border-radius: 2px;
  background: var(--blue);
  color: #fff;
}

.add svg {
  width: 18px;
  height: 16px;
}

.unit {
  margin-left: 5px;
}

.dialog-foot {
  display: grid;
  grid-template-columns: 1fr auto 1fr;
  align-items: start;
  padding: 5px 6px 0 0;
}

.dialog-foot .check {
  padding-left: 4px;
}

.actions {
  display: flex;
  gap: 6px;
  margin-top: 8px;
}

/* overlays */
.meter {
  position: absolute;
  right: 2px;
  top: 621px;
  width: 9px;
  height: 58px;
  border: solid #555;
  border-width: 14px 2px 2px;
  border-radius: 4px;
  background: repeating-linear-gradient(#45c46a 0 1px, #555 1px 2px);
}

.ime {
  position: absolute;
  right: 0;
  bottom: 0;
  display: flex;
  align-items: center;
  justify-content: space-between;
  width: 164px;
  height: 29px;
  padding: 0 9px 0 8px;
  border: 2px solid #8fb4e0;
  border-radius: 4px;
  background: #f7f8fc;
  box-shadow: inset 0 0 0 1px #c9dbf1;
}

.ime b {
  color: #4a77a8;
  font-size: 15px;
}
```
